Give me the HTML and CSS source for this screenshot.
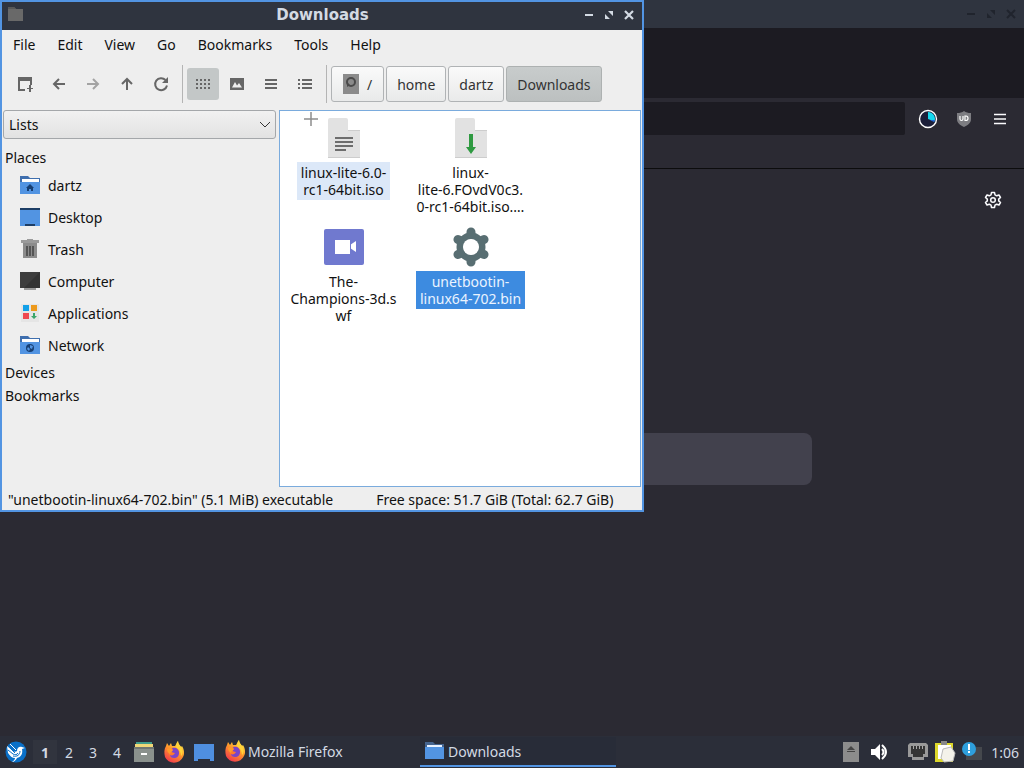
FILE: index.html
```
<!DOCTYPE html>
<html lang="en">
<head>
  <meta charset="UTF-8">
  <title>Downloads</title>
  <link rel="stylesheet" href="styles.css">
</head>
<body>

<svg class="defs" aria-hidden="true">
  <defs>
    <linearGradient id="fox" x1="0.8" y1="0" x2="0.2" y2="1">
      <stop offset="0" stop-color="#fff04a"/>
      <stop offset="0.45" stop-color="#ff9a2a"/>
      <stop offset="1" stop-color="#f0324f"/>
    </linearGradient>
    <symbol id="firefox" viewBox="0 0 22 22">
      <path fill="url(#fox)" d="M3 5 4 2l2 3 2-3 1 3h3c1-1 1-3 3-5 0 3 2 4 3 6l1-1c2 3 3 8 1 11a10 10 0 0 1-18 0C1 12 1 8 3 5z"/>
      <path fill="#ffd43a" d="M15 0c0 3 2 4 3 6 2 3 2 7 0 9 0-4-2-7-5-9 0-2 1-4 2-6z"/>
      <circle cx="11" cy="12" r="5" fill="#ff7a2c"/>
      <path fill="#7a45c8" d="M9 7c4-1 7 1 7 5 0 3-2 5-5 5-2 0-4-1-4-3 2 1 4 0 5-2-2 0-3-1-4-2l2-1z"/>
      <path fill="#ff9a2a" d="M4 8c2-1 4 0 6 1-1 2-3 2-3 4-2-1-3-3-3-5z"/>
    </symbol>
  </defs>
</svg>

<div class="desktop">
  <!-- browser behind -->
  <div class="browser">
    <div class="browser-title">
      <svg width="50" height="12" viewBox="0 0 50 12" fill="none" stroke="#20242d" stroke-width="2"><path d="M1 6h8M41 2l8 8M49 2l-8 8"/><path fill="#20242d" stroke="none" d="M21 5v5h5zM24 2h5v5z"/></svg>
    </div>
    <div class="browser-tabs"></div>
    <div class="browser-toolbar">
      <input class="url" type="text" aria-label="Address">
      <button class="tool" aria-label="Privacy">
        <svg width="20" height="20" viewBox="0 0 20 20"><circle cx="10" cy="10" r="8.5" fill="#1c1f3a" stroke="#fff" stroke-width="1.4"/><path d="M10 10V3a7 7 0 0 1 6.5 9.5z" fill="#15d8ef"/><path d="M12 11l5 0-1 2z" fill="#2468d8"/></svg>
      </button>
      <button class="tool" aria-label="uBlock Origin">
        <svg width="16" height="18" viewBox="0 0 16 18"><path d="M8 1c2 1.500 4 2 7 2v6c0 4-3 6-7 8-4-2-7-4-7-8V3c3 0 5-.5 7-2z" fill="#7d7d82"/><path d="M4 6v3q0 1.500 1.500 1.500T7 9V6M9 6v4.500h1q2 0 2-2.200T10 6z" fill="none" stroke="#fff" stroke-width="1.200"/></svg>
      </button>
      <button class="tool" aria-label="Menu">
        <svg width="14" height="12" viewBox="0 0 14 12" stroke="#fbfbfe" stroke-width="1.500"><path d="M1 1.500h12M1 6h12M1 10.500h12"/></svg>
      </button>
    </div>
    <div class="bookmarks-bar"></div>
    <div class="newtab">
      <button class="customize" aria-label="Customize">
        <svg width="18" height="18" viewBox="0 0 18 18" fill="none" stroke="#fbfbfe" stroke-width="1.500" stroke-linejoin="round"><path d="M7.500 1.500h3l.5 2.300 1.700 1 2.300-.8 1.500 2.500-1.800 1.600v1.800l1.800 1.600-1.500 2.500-2.300-.8-1.700 1-.5 2.300h-3L7 14.200l-1.700-1-2.300.8-1.500-2.500 1.800-1.600V8.100L1.500 6.500 3 4l2.300.8 1.700-1z"/><circle cx="9" cy="9" r="2.300"/></svg>
      </button>
      <input class="search" type="text" aria-label="Search">
    </div>
  </div>

  <!-- file manager -->
  <div class="window">
    <div class="titlebar">
      <svg width="18" height="16" viewBox="0 0 18 16"><path d="M2 0h6l2 2h7v12H2z" fill="#696969"/><path d="M2 0h6l2 2H2z" fill="#585858"/></svg>
      <span class="title">Downloads</span>
      <div class="winbtns">
        <button aria-label="Minimize"><svg width="10" height="10" viewBox="0 0 10 10"><path d="M1 5h8" stroke="#d3dae3" stroke-width="2"/></svg></button>
        <button aria-label="Maximize"><svg width="10" height="10" viewBox="0 0 10 10" fill="#d3dae3"><path d="M4 1h5v5zM1 4v5h5z"/></svg></button>
        <button aria-label="Close"><svg width="10" height="10" viewBox="0 0 10 10"><path d="M1 1l8 8M9 1L1 9" stroke="#d3dae3" stroke-width="2.200"/></svg></button>
      </div>
    </div>

    <div class="menubar">
      <button>File</button><button>Edit</button><button>View</button><button>Go</button><button>Bookmarks</button><button>Tools</button><button>Help</button>
    </div>

    <div class="toolbar">
      <button class="tb" aria-label="New tab"><svg width="16" height="16" viewBox="0 0 16 16" fill="#666"><path d="M1 1h14v4H1z"/><path d="M1 5h2v8h5v2H1zM13 5h2v4h-2z"/><path d="M12 9h2v3h2v1h-2v3h-2v-3h-2v-1h2z"/></svg></button>
      <button class="tb" aria-label="Back"><svg width="16" height="16" viewBox="0 0 16 16" fill="none" stroke="#666" stroke-width="2"><path d="M14 8H4M8 3L3 8l5 5"/></svg></button>
      <button class="tb" aria-label="Forward"><svg width="16" height="16" viewBox="0 0 16 16" fill="none" stroke="#a3a3a3" stroke-width="2"><path d="M2 8h10M8 3l5 5-5 5"/></svg></button>
      <button class="tb" aria-label="Up"><svg width="16" height="16" viewBox="0 0 16 16" fill="none" stroke="#666" stroke-width="2"><path d="M8 14V4M3 8l5-5 5 5"/></svg></button>
      <button class="tb" aria-label="Reload"><svg width="16" height="16" viewBox="0 0 16 16"><path d="M12.500 4A6 6 0 1 0 14 9.500" fill="none" stroke="#666" stroke-width="2"/><path d="M15 1v6H9z" fill="#666"/></svg></button>
      <span class="sep"></span>
      <button class="tb active" aria-label="Icon view"><svg width="16" height="12" viewBox="0 0 16 12" stroke="#666" stroke-width="2" stroke-dasharray="2 2"><path d="M1 2h14M1 6h14M1 10h14"/></svg></button>
      <button class="tb" aria-label="Thumbnail view"><svg width="16" height="14" viewBox="0 0 16 14"><path fill="#666" fill-rule="evenodd" d="M1 1h14v12H1zM3 10.500h10L10 6 8 8.500 6 5z"/></svg></button>
      <button class="tb" aria-label="Compact view"><svg width="14" height="12" viewBox="0 0 14 12" stroke="#666" stroke-width="2"><path d="M1 2h12M1 6h12M1 10h12"/></svg></button>
      <button class="tb" aria-label="Detailed list view"><svg width="16" height="12" viewBox="0 0 16 12" stroke="#666" stroke-width="2"><path d="M1 2h2M5 2h10M1 6h2M5 6h10M1 10h2M5 10h10"/></svg></button>
      <span class="sep"></span>
      <button class="crumb root"><svg width="16" height="20" viewBox="0 0 16 20"><path fill="#8b8b8b" d="M0 0h16v20H0z"/><circle cx="8" cy="8" r="4" fill="#8b8b8b" stroke="#4a4a4a" stroke-width="2"/><path d="M4 8v5l3-2z" fill="#4a4a4a"/></svg>/</button>
      <button class="crumb">home</button>
      <button class="crumb">dartz</button>
      <button class="crumb current">Downloads</button>
    </div>

    <div class="content">
      <div class="sidebar">
        <div class="mode">
          <select aria-label="Side pane mode"><option>Lists</option></select>
          <svg width="12" height="8" viewBox="0 0 12 8" fill="none" stroke="#333"><path d="M1 1l5 5 5-5"/></svg>
        </div>
        <div class="group">Places</div>
        <a class="place" href="#"><svg width="20" height="20" viewBox="0 0 20 20"><path fill="#3f6fae" d="M0 1h8l2 2h10v6H0z"/><path fill="#fff" d="M2 4h17v3H2z"/><path fill="#5294e2" d="M0 7h20v12H0z"/><path fill="#173f73" d="M10 9l4 4h-1v3h-2v-2H9v2H7v-3H6z"/></svg>dartz</a>
        <a class="place" href="#"><svg width="20" height="20" viewBox="0 0 20 20"><path fill="#5294e2" d="M0 1h20v18H0z"/><path fill="#1d3e66" d="M0 1h20v2H0zM5 17h10v2H5z"/></svg>Desktop</a>
        <a class="place" href="#"><svg width="20" height="20" viewBox="0 0 20 20"><path fill="#8c8c8c" d="M3 4h14v15H3z"/><path fill="#555" d="M6 7h2v10H6zM9 7h2v10H9zM12 7h2v10h-2z"/><path fill="#9b9b9b" d="M1 1h6V0h6v1h6v3H1z"/></svg>Trash</a>
        <a class="place" href="#"><svg width="20" height="20" viewBox="0 0 20 20"><path fill="#999" d="M4 17h12v2H4z"/><path fill="#333" d="M0 1h20v16H0z"/><path fill="#3d3d3d" d="M0 1h20L4 17H0z"/></svg>Computer</a>
        <a class="place" href="#"><svg width="20" height="20" viewBox="0 0 20 20"><path fill="#e5e5e5" d="M1 1h18v18H1z"/><path fill="#12a0e8" d="M3 2h6v6H3z"/><path fill="#ed9a1c" d="M11 2h6v6h-6z"/><path fill="#ef4850" d="M3 10h6v6H3z"/><path fill="#3ba56a" d="M13 10h2v3h2l-3 3-3-3h2z"/></svg>Applications</a>
        <a class="place" href="#"><svg width="20" height="20" viewBox="0 0 20 20"><path fill="#3f6fae" d="M0 1h8l2 2h10v6H0z"/><path fill="#fff" d="M2 4h17v3H2z"/><path fill="#5294e2" d="M0 7h20v12H0z"/><circle cx="10" cy="13" r="4" fill="#173f73"/><path fill="#5294e2" d="M10 10l3 1-1 3-2-1zM8 12l2 2-1 2-2-2z"/></svg>Network</a>
        <div class="group">Devices</div>
        <div class="group">Bookmarks</div>
      </div>

      <div class="files">
        <div class="file">
          <svg class="emblem" width="14" height="14" viewBox="0 0 14 14"><path d="M7 0v14M0 7h14" stroke="#8d8d8d" stroke-width="1.500"/></svg>
          <svg width="40" height="40" viewBox="0 0 40 40"><path fill="#e2e2e2" d="M6 0h16q2 0 2 2v10h12v28H4V2q0-2 2-2z"/><path fill="#cdcdcd" d="M24 12h12v1H24zM4 39h32v1H4z"/><path stroke="#6d6d6d" stroke-width="2" d="M11 20h18M11 24h18M11 28h18M11 32h11"/></svg>
          <span class="name dragged">linux-lite-6.0-<br>rc1-64bit.iso</span>
        </div>
        <div class="file">
          <svg width="40" height="40" viewBox="0 0 40 40"><path fill="#e2e2e2" d="M6 0h16q2 0 2 2v10h12v28H4V2q0-2 2-2z"/><path fill="#cdcdcd" d="M24 12h12v1H24zM4 39h32v1H4z"/><path fill="#2f9a41" d="M18 16h4v13h3l-5 7-5-7h3z"/></svg>
          <span class="name">linux-<br>lite-6.FOvdV0c3.<br>0-rc1-64bit.iso.…</span>
        </div>
        <div class="file">
          <svg width="40" height="40" viewBox="0 0 40 40"><rect y="2" width="40" height="36" rx="2" fill="#7079cf"/><path fill="#fff" d="M11 13h15v5l6-4v11l-6-4v6H11z"/><path fill="#7079cf" d="M26 13h1v14h-1z"/></svg>
          <span class="name">The-<br>Champions-3d.s<br>wf</span>
        </div>
        <div class="file">
          <svg width="40" height="40" viewBox="0 0 40 40"><g fill="none" stroke="#586e72"><circle cx="20" cy="20" r="11" stroke-width="7"/><path stroke-width="9" stroke-linecap="round" d="M20 5v2M20 33v2M7 12.500l2 1M31 26.500l2 1M7 27.500l2-1M31 13.500l2-1"/></g><circle cx="20" cy="20" r="8" fill="#fff"/></svg>
          <span class="name selected">unetbootin-<br>linux64-702.bin</span>
        </div>
      </div>
    </div>

    <div class="status">
      <span class="info">"unetbootin-linux64-702.bin" (5.1 MiB) executable</span>
      <span>Free space: 51.7 GiB (Total: 62.7 GiB)</span>
    </div>
  </div>
</div>

<div class="panel">
  <button class="start" aria-label="Menu"><svg width="22" height="22" viewBox="0 0 22 22"><circle cx="11" cy="11" r="10.500" fill="#0a70c8"/><path fill="#fff" d="M2 5l6 5c1 1 3 1 4 0 0-3 2-5 5-4l3 1-3 1c1 5-1 8-5 9-1 2-3 4-5 4 2-1 3-3 3-4-3 0-5-2-7-5z"/><path fill="none" stroke="#0a70c8" d="M3 9l5 4c2 1 4 1 5-1M5 7l5 5M8 15c4 1 7-1 7-5"/><path fill="none" stroke="#fff" d="M5 3l6 6"/></svg></button>
  <div class="pager">
    <button class="on">1</button><button>2</button><button>3</button><button>4</button>
  </div>
  <div class="launchers">
    <button aria-label="File manager"><svg width="22" height="22" viewBox="0 0 22 22"><path fill="#3f9c8c" d="M3 1h16v4H3z"/><path fill="#f0d878" d="M2 3h18v5H2z"/><path fill="#8a918d" d="M1 6h20v15H1z"/><path fill="#6f7672" d="M1 6h20v2H1z"/><path fill="#fff" d="M8 12h6v2H8z"/></svg></button>
    <button aria-label="Firefox"><svg width="22" height="22"><use href="#firefox"/></svg></button>
    <button aria-label="Show desktop"><svg width="22" height="22" viewBox="0 0 22 22"><path fill="#4f8fe0" d="M1 3h20v17h-4v-2H5v2H1z"/></svg></button>
  </div>
  <button class="task"><svg width="22" height="22"><use href="#firefox"/></svg>Mozilla Firefox</button>
  <button class="task current"><svg width="22" height="22" viewBox="0 0 22 22"><path fill="#45648e" d="M1 2h8l2 2h9v6H1z"/><path fill="#e9f2ff" d="M3 5h15v2H3z"/><path fill="#5294e2" d="M1 7h19v12H1z"/></svg>Downloads</button>
  <div class="tray">
    <svg width="18" height="20" viewBox="0 0 18 20"><path fill="#8c8c8c" d="M1 0h16v20H1z"/><path fill="#444" d="M9 4l4 4H5zM5 9h8v1H5z"/></svg>
    <svg class="volume" width="18" height="16" viewBox="0 0 18 16"><path fill="#fff" d="M0 5h4l5-5v16l-5-5H0z"/><path fill="none" stroke="#fff" stroke-width="2" d="M11 5q3 3 0 6M11 1q8 7 0 14"/></svg>
    <svg class="net" width="20" height="18" viewBox="0 0 20 18"><path fill="#999" d="M2 0h16l2 2v12h-4v3H4v-3H0V2z"/><path fill="#353535" d="M3 3h14v8h-2v3H5v-3H3z"/><path stroke="#aaa" d="M5.500 3v3M8.500 3v3M11.500 3v3M14.500 3v3"/></svg>
    <svg width="22" height="22" viewBox="0 0 22 22"><path fill="#dcd72b" d="M1 2h18v19H1z"/><path fill="#fff" d="M4 4h13v14H4z"/><path fill="#888" d="M7 0h6v4H7z"/><path fill="#f4f2ea" stroke="#bbb" d="M9 8l8-2 4 6-2 8-9 1-3-4z"/></svg>
    <svg width="20" height="20" viewBox="0 0 20 20"><path fill="#45484d" d="M4 5h16v13H4z"/><circle cx="7" cy="7" r="7" fill="#2e9fdc"/><path stroke="#fff" stroke-width="2" d="M7 2v6M7 9v2"/></svg>
    <span class="clock">1:06</span>
  </div>
</div>

</body>
</html>
```
FILE: styles.css
```
* {
  box-sizing: border-box;
}

body {
  margin: 0;
  height: 100vh;
  display: flex;
  flex-direction: column;
  overflow: hidden;
  background: #2b2a33;
  color: #111;
  font-family: "Noto Sans", "Liberation Sans", sans-serif;
  font-size: 14px;
}

button, select, input {
  font: inherit;
  color: inherit;
  margin: 0;
  padding: 0;
  border: none;
  background: none;
}

svg {
  display: block;
  flex: none;
}

.defs {
  position: absolute;
  width: 0;
  height: 0;
}

.desktop {
  position: relative;
  flex: 1;
}

/* browser */
.browser {
  height: 100%;
  display: flex;
  flex-direction: column;
}

.browser-title {
  height: 28px;
  padding: 0 8px;
  display: flex;
  align-items: center;
  justify-content: flex-end;
  background: #2f343f;
}

.browser-tabs {
  height: 70px;
  background: #1c1b22;
}

.browser-toolbar {
  padding: 4px 6px 0 120px;
  display: flex;
  align-items: center;
}

.url {
  flex: 1;
  height: 33px;
  margin-right: 5px;
  border-radius: 2px;
  background: #1c1b22;
}

.tool {
  width: 36px;
  height: 32px;
  display: grid;
  place-items: center;
}

.bookmarks-bar {
  height: 34px;
  border-bottom: 1px solid #0c0c0d;
}

.newtab {
  flex: 1;
  display: flex;
  flex-direction: column;
  padding: 15px;
}

.customize {
  width: 32px;
  height: 32px;
  display: grid;
  place-items: center;
  align-self: flex-end;
}

.search {
  width: 600px;
  max-width: 100%;
  height: 52px;
  margin: 217px auto 0;
  border-radius: 8px;
  background: #42414d;
}

/* file manager window */
.window {
  position: absolute;
  top: 0;
  left: 0;
  width: calc(100vw - 380px);
  height: calc(100vh - 256px);
  display: flex;
  flex-direction: column;
  border: 2px solid #5294e2;
  background: #eee;
}

.titlebar {
  height: 28px;
  padding: 0 3px 2px 4px;
  display: grid;
  grid-template-columns: 60px 1fr 60px;
  align-items: center;
  background: #2f343f;
  color: #d3dae3;
}

.title {
  text-align: center;
  font-family: "DejaVu Sans", sans-serif;
  font-size: 15px;
  font-weight: bold;
}

.winbtns {
  display: flex;
  justify-content: flex-end;
}

.winbtns button {
  width: 21px;
  height: 20px;
  display: grid;
  place-items: center;
}

.menubar {
  height: 29px;
  display: flex;
  align-items: center;
}

.menubar button {
  padding: 0 11px;
}

.toolbar {
  height: 51px;
  padding: 0 7px 1px;
  display: flex;
  align-items: center;
  gap: 2px;
  color: #333;
}

.tb {
  width: 32px;
  height: 32px;
  display: grid;
  place-items: center;
  border-radius: 3px;
}

.tb.active {
  background: #c3c7c7;
}

.sep {
  width: 1px;
  height: 38px;
  margin: 0 2px 0 3px;
  background: #b4b4b4;
}

.crumb {
  height: 36px;
  padding: 0 10px;
  display: flex;
  align-items: center;
  gap: 8px;
  border: 1px solid #b0b3b5;
  border-radius: 3px;
  background: linear-gradient(#fafafa, #e9eaea);
}

.crumb.root {
  padding: 0 11px;
}

.crumb.current {
  border-color: #adb1b1;
  background: linear-gradient(#c8cccc, #bcc0c0);
}

.content {
  flex: 1;
  display: flex;
  min-height: 0;
}

.sidebar {
  width: 277px;
  padding-left: 1px;
}

.mode {
  position: relative;
  margin: 0 3px 7px 0;
}

.mode select {
  width: 100%;
  height: 29px;
  padding-left: 5px;
  appearance: none;
  border: 1px solid #a4a7aa;
  border-radius: 3px;
  background: linear-gradient(#f1f1f1, #e2e2e2);
}

.mode svg {
  position: absolute;
  top: 11px;
  right: 5px;
  pointer-events: none;
}

.group {
  height: 23px;
  line-height: 23px;
  padding-left: 2px;
}

.place {
  height: 32px;
  padding-left: 17px;
  display: flex;
  align-items: center;
  gap: 8px;
  color: inherit;
  text-decoration: none;
}

.files {
  flex: 1;
  margin-right: 1px;
  padding-top: 7px;
  display: grid;
  grid-template-columns: repeat(auto-fill, 127px);
  grid-auto-rows: 109px;
  align-content: start;
  border: 1px solid #7aabdd;
  background: #fff;
}

.file {
  position: relative;
  display: flex;
  flex-direction: column;
  align-items: center;
  gap: 4px;
}

.emblem {
  position: absolute;
  top: -6px;
  left: 24px;
}

.name {
  padding: 2px 4px;
  line-height: 17px;
  text-align: center;
  white-space: nowrap;
}

.name.dragged {
  background: #dce8f8;
}

.name.selected {
  background: #3d8be0;
  color: #eaf3ff;
}

.status {
  height: 23px;
  padding: 1px 6px 0;
  display: flex;
  align-items: center;
  gap: 43px;
  white-space: nowrap;
}

/* bottom panel */
.panel {
  height: 32px;
  padding: 0 5px;
  display: flex;
  align-items: center;
  background: #2b2e39;
  color: #d3dae3;
}

.pager {
  display: flex;
  margin: 0 4px 0 6px;
}

.pager button {
  width: 24px;
  height: 24px;
}

.pager .on {
  background: #31343e;
  font-weight: bold;
}

.launchers {
  display: flex;
  gap: 8px;
  margin-right: 9px;
}

.task {
  width: 196px;
  height: 30px;
  display: flex;
  align-items: center;
  gap: 2px;
  border-bottom: 2px solid transparent;
}

.task.current {
  padding-left: 4px;
  border-color: #5294e2;
  background: #282c38;
}

.tray {
  margin-left: auto;
  display: flex;
  align-items: center;
  gap: 6px;
}

.tray .volume {
  margin-left: 5px;
}

.tray .net {
  margin-left: 13px;
}

.clock {
  margin-left: 3px;
}
```
